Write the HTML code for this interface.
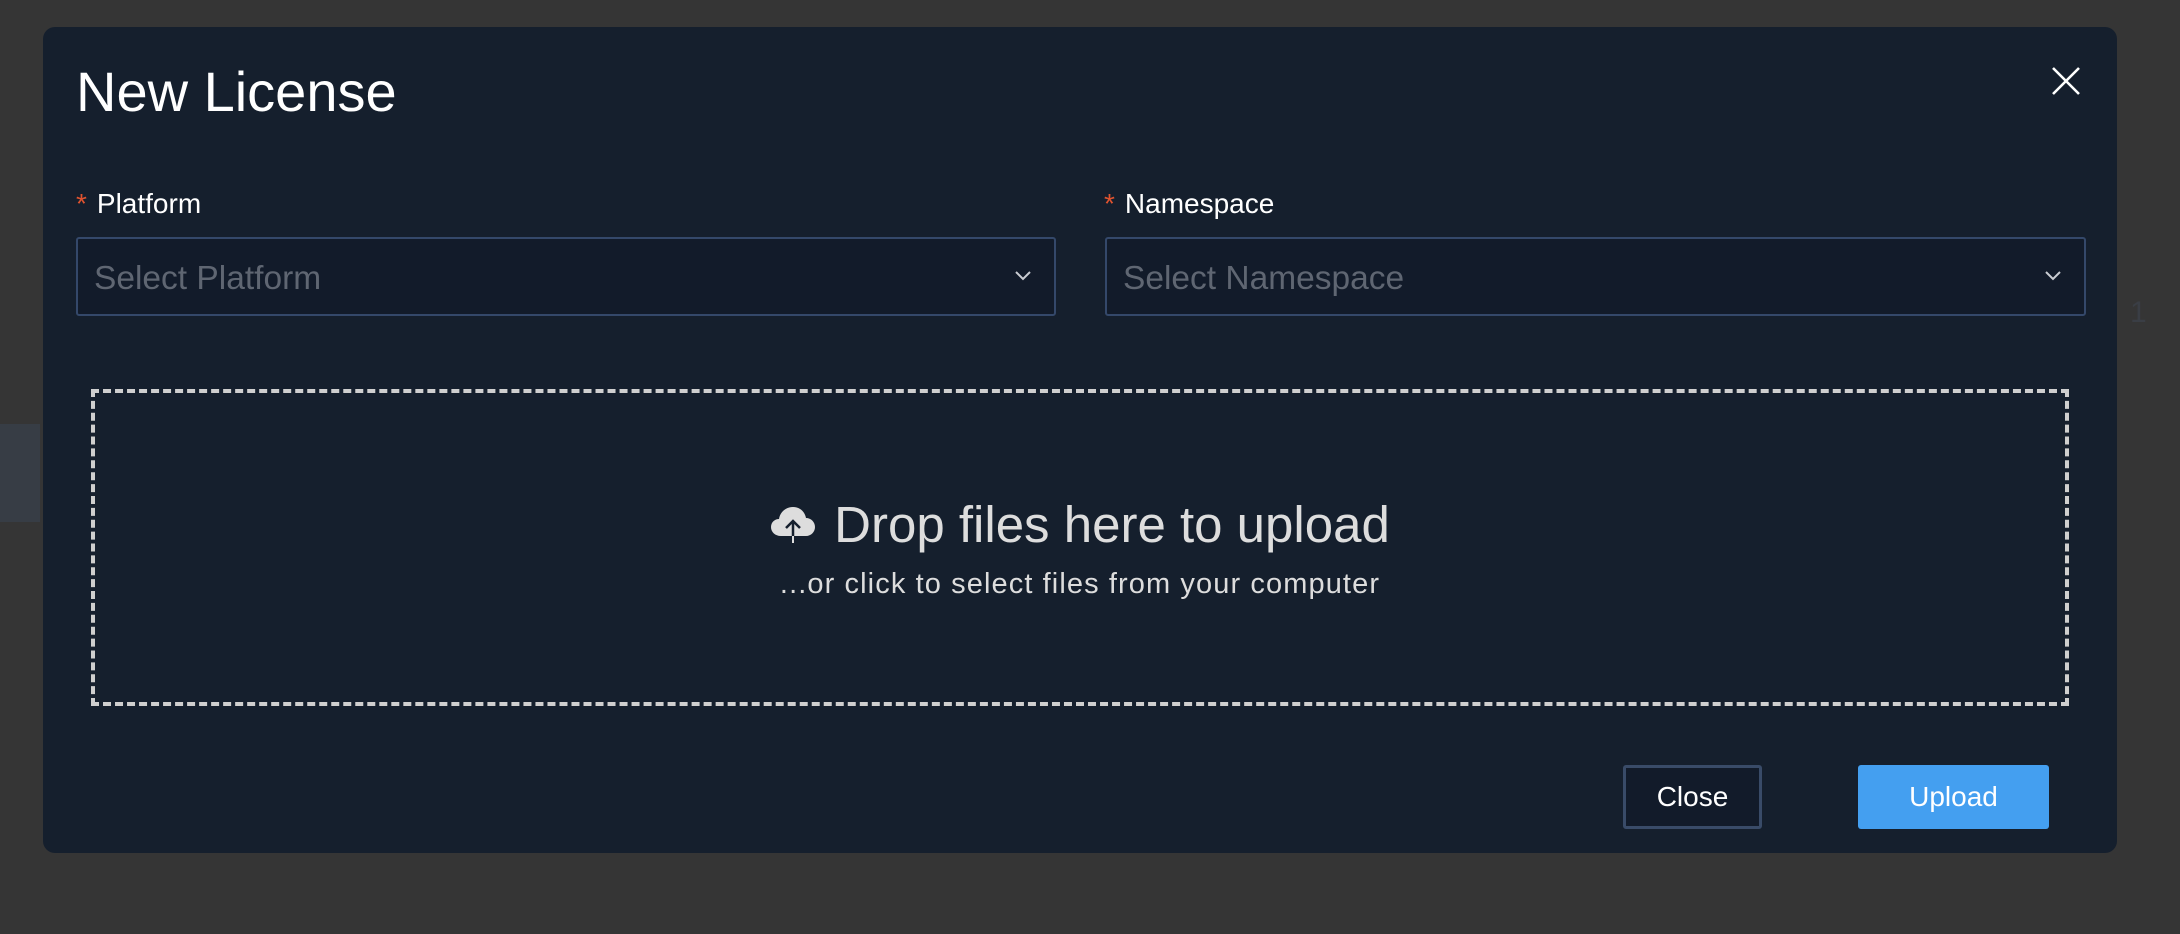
<!DOCTYPE html>
<html><head><meta charset="utf-8"><style>
*{margin:0;padding:0;box-sizing:border-box}
html,body{width:2180px;height:934px;overflow:hidden;background:#353535;font-family:"Liberation Sans",Arial,sans-serif;position:relative}
.blk{position:absolute;left:0;top:424px;width:40px;height:98px;background:#373d45}
.one{position:absolute;left:2130px;top:296px;font-size:30px;color:#3a3e45}
.modal{position:absolute;left:43px;top:27px;width:2074px;height:826px;background:#151f2d;border-radius:12px}
.title{position:absolute;left:76px;top:64px;font-size:56px;color:#fff;line-height:1}
.x{position:absolute;left:2050px;top:65px}
.lbl{position:absolute;top:190px;font-size:28px;color:#fff;line-height:1}
.lbl b{color:#e0532f;font-weight:normal;margin-right:10px}
.sel{position:absolute;top:237px;height:79px;border:2px solid #34486a;border-radius:3px;background:#121b2a}
.sel span{position:absolute;left:16px;top:22px;font-size:33.5px;color:#5f6672;line-height:1.1}
.sel svg{position:absolute;right:22px;top:31px}
.drop{position:absolute;left:91px;top:389px;width:1978px;height:317px;border:4px dashed #cfcfcf}
.h{position:absolute;left:0;width:100%;top:106px;text-align:center;font-size:51px;color:#ddd;line-height:1}
.s{position:absolute;left:0;width:100%;top:177px;text-align:center;font-size:29px;color:#ddd;letter-spacing:1.1px;line-height:1}
.btn{position:absolute;top:765px;height:64px;font-size:28px;color:#fff;text-align:center;line-height:58px;border-radius:3px}
</style></head><body>
<div class="blk"></div><div class="one">1</div>
<div class="modal"></div>
<div class="title">New License</div>
<svg class="x" width="32" height="32" viewBox="0 0 32 32"><path d="M3 3L29 29M29 3L3 29" stroke="#fff" stroke-width="2.6"/></svg>
<div class="lbl" style="left:76px"><b>*</b>Platform</div>
<div class="lbl" style="left:1104px"><b>*</b>Namespace</div>
<div class="sel" style="left:76px;width:980px"><span>Select Platform</span><svg width="18" height="12" viewBox="0 0 18 12"><path d="M2 2L9 9L16 2" stroke="#c9ccd2" stroke-width="2" fill="none"/></svg></div>
<div class="sel" style="left:1105px;width:981px"><span>Select Namespace</span><svg width="18" height="12" viewBox="0 0 18 12"><path d="M2 2L9 9L16 2" stroke="#c9ccd2" stroke-width="2" fill="none"/></svg></div>
<div class="drop">
<div class="h"><svg width="46" height="38" viewBox="0 0 46 38" style="vertical-align:-2px;margin-right:18px"><path d="M11 30C5 30 1 26 1 21C1 16 5 13 9 13C10 6 16 1 23 1C30 1 35 6 36 12C41 12 45 16 45 21C45 26 41 30 36 30Z" fill="#ddd"/><path d="M23 37V16M16 22L23 15L30 22" stroke="#151f2d" stroke-width="2.5" fill="none"/><path d="M23 30V37" stroke="#ddd" stroke-width="2"/></svg>Drop files here to upload</div>
<div class="s">...or click to select files from your computer</div>
</div>
<div class="btn" style="left:1623px;width:139px;border:3px solid #394b68;background:#121b2a">Close</div>
<div class="btn" style="left:1858px;width:191px;background:#449ff0;line-height:64px">Upload</div>
</body></html>
